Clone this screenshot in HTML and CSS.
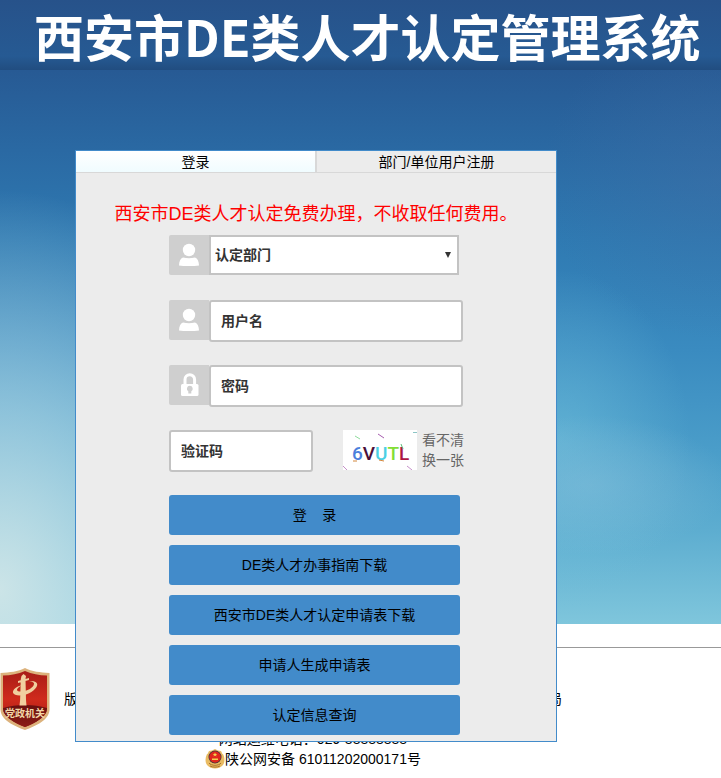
FILE: index.html
```
<!DOCTYPE html>
<html lang="zh-CN">
<head>
  <meta charset="UTF-8" />
  <meta name="viewport" content="width=device-width, initial-scale=1.0"/>
  <title>西安市DE类人才认定管理系统</title>
  <link rel="stylesheet" href="styles.css">
</head>
<body>
  <div class="banner">
    <header class="header">
      <h1>西安市DE类人才认定管理系统</h1>
    </header>

    <div class="login-box">
      <div class="tabs">
        <button type="button" class="tab active">登录</button>
        <button type="button" class="tab">部门/单位用户注册</button>
      </div>

      <form class="login-form">
        <p class="notice">西安市DE类人才认定免费办理，不收取任何费用。</p>

        <div class="fields">
          <div class="field">
            <label class="icon" for="dept" aria-label="认定部门">
              <svg viewBox="0 0 40 40"><circle cx="20" cy="15" r="6.200"/><path d="M10 30.500c.2-4.500 1.400-7 4-8 4 1 8 1 12 0 2.600 1 3.800 3.500 4 8-5 .8-15 .8-20 0z"/></svg>
            </label>
            <select id="dept">
              <option>认定部门</option>
            </select>
            <span class="arrow"></span>
          </div>

          <div class="field">
            <label class="icon" for="username" aria-label="用户名">
              <svg viewBox="0 0 40 40"><circle cx="20" cy="15" r="6.200"/><path d="M10 30.500c.2-4.500 1.400-7 4-8 4 1 8 1 12 0 2.600 1 3.800 3.500 4 8-5 .8-15 .8-20 0z"/></svg>
            </label>
            <input type="text" id="username" placeholder="用户名">
          </div>

          <div class="field">
            <label class="icon" for="password" aria-label="密码">
              <svg viewBox="0 0 40 40">
                <path class="shackle" d="M16 20v-5.500a4.800 4.800 0 0 1 9.600 0V20"/>
                <rect x="12" y="19" width="17.500" height="12" rx="1.500"/>
                <path class="keyhole" d="M20.800 20.800a2.900 2.900 0 0 1 1.500 5.400V28.500h-3V26.200a2.900 2.900 0 0 1 1.500-5.400z"/>
              </svg>
            </label>
            <input type="password" id="password" placeholder="密码">
          </div>

          <div class="field captcha">
            <input type="text" id="code" placeholder="验证码" aria-label="验证码">
            <svg class="captcha-img" viewBox="0 0 74 40" role="img" aria-label="验证码图片">
              <rect width="74" height="40" fill="#fff"/>
              <text x="9" y="30"><tspan fill="#4c7fdc">6</tspan><tspan fill="#4a1038">V</tspan><tspan fill="#4bd0e4">U</tspan><tspan fill="#83de35">T</tspan><tspan fill="#ab1543">L</tspan></text>
              <g fill="none" stroke-width="1">
                <path d="M0 36l4 4M64 36l5 4" stroke="#c58fc9"/>
                <path d="M35 4l6 4" stroke="#a65cae"/>
                <path d="M12 6l5 3" stroke="#8edc9c"/>
                <path d="M58 14l2 5" stroke="#5fbf7b"/>
                <path d="M70 2.500h4" stroke="#8cc5c5"/>
                <path d="M10 31h4M36 30l5 1" stroke="#d3873d"/>
              </g>
            </svg>
            <a class="refresh" href="#">看不清<br>换一张</a>
          </div>
        </div>

        <div class="buttons">
          <button type="submit">登&nbsp;&nbsp;&nbsp;&nbsp;录</button>
          <button type="button">DE类人才办事指南下载</button>
          <button type="button">西安市DE类人才认定申请表下载</button>
          <button type="button">申请人生成申请表</button>
          <button type="button">认定信息查询</button>
        </div>
      </form>
    </div>
  </div>

  <footer class="footer">
    <svg class="badge" viewBox="0 0 50 64" role="img" aria-label="党政机关">
      <defs>
        <linearGradient id="red" x1="0" y1="0" x2="0" y2="1">
          <stop offset="0" stop-color="#a81d17"/>
          <stop offset=".5" stop-color="#cf2b1c"/>
          <stop offset="1" stop-color="#a31813"/>
        </linearGradient>
        <linearGradient id="dark" x1="0" y1="0" x2="0" y2="1">
          <stop offset="0" stop-color="#68100f"/>
          <stop offset="1" stop-color="#8c1d17"/>
        </linearGradient>
      </defs>
      <path d="M25 0c7 3.500 15 4.500 24.500 5v37C49 52 36 58 25 62 14 58 1 52 .5 42V5C10 4.500 18 3.500 25 0z" fill="#dcb27c"/>
      <path d="M25 3c7 3.200 14 4.200 22 4.600V41c-.5 8-12 14-22 18C15 55 3.500 49 3 41V7.600C11 7.200 18 6.200 25 3z" fill="url(#red)"/>
      <path d="M3 40c13-4 31-4 44 0v1c-.5 8-12 14-22 18C15 55 3.500 49 3 41z" fill="url(#dark)"/>
      <g fill="#f0cf9f">
        <path d="M21.500 8l2-2 2.500 2-.5 3 .5 21 .5 5.500h-7l.6-5.500.7-21zM18 13l11-3v2l-11 3z"/>
        <path d="M28 14c7-2 11 1 8.500 5-3 5-11 8.500-17 8.500-7 0-8.500-4-4-7.500 2-1.600 4-2.300 6-2.600-5 2.500-6 5.600-2 6 5 .5 12-2.400 14-6 1.600-2.500-.5-4-5.500-3.400z"/>
      </g>
      <text x="25" y="49">党政机关</text>
    </svg>
    <div class="copyright">
      <p class="owner"><span>版权所有</span><span>西安市人力资源和社会保障局</span></p>
      <p>网站运维电话：029-88888888</p>
      <p class="record">
        <svg class="police" viewBox="0 0 20 20" aria-hidden="true">
          <path d="M2 5c-2 4-2 8 0 11 2 2.500 5 3.500 8 3.500s6-1 8-3.500c2-3 2-7 0-11z" fill="#e9bb62"/>
          <path d="M4 14c2 3 10 3 12 0M5 17c3 1.500 7 1.500 10 0" fill="none" stroke="#a8702c"/>
          <path d="M10 0l3 1.500 3 .5 1.500 3v5c-.5 3-4.500 5-7.500 5.500-3-.5-7-2.500-7.500-5.500V5L4 2l3-.5z" fill="#e9bb62"/>
          <circle cx="10" cy="8" r="6.500" fill="#3b3440"/>
          <circle cx="10" cy="8" r="5.800" fill="#e0261c"/>
          <path d="M10 3.500l.7 1.500h1.600L11 6l.5 1.500L10 6.600l-1.500.9L9 6 7.700 5h1.600zM7 9.500h6v1.500H7z" fill="#f6cf4b"/>
        </svg>
        <a href="#">陕公网安备 61011202000171号</a>
      </p>
    </div>
  </footer>
</body>
</html>
```

FILE: styles.css
```
* {
  box-sizing: border-box;
}
body {
  margin: 0;
  background: #fff;
  color: #000;
  font-family: "Liberation Sans", "Noto Sans CJK SC", sans-serif;
  font-size: 14px;
  line-height: 20px;
}
h1, p {
  margin: 0;
}
a {
  color: inherit;
  text-decoration: none;
}
button, input, select {
  font-family: inherit;
  font-size: 14px;
}

/* banner */
.banner {
  position: relative;
  height: 624px;
  background:
    radial-gradient(ellipse 140px 70px at 590px 485px, rgba(150,198,222,0.35), rgba(140,195,220,0.2) 60%, rgba(140,195,220,0) 100%),
    radial-gradient(ellipse 130px 170px at 560px 440px, rgba(110,190,218,0.6), rgba(110,190,218,0) 100%),
    radial-gradient(ellipse 300px 400px at 0 590px, rgba(208,230,232,0.95), rgba(190,224,232,0.6) 45%, rgba(170,215,230,0) 100%),
    radial-gradient(ellipse 180px 160px at 100% 180px, rgba(66,110,165,0.4), rgba(66,110,165,0) 100%),
    linear-gradient(to bottom, #275a94 70px, #2a69a3 150px, #2f7ab2 240px, #3a8bc0 350px, #4a9dc9 450px, #5dadd0 530px, #7fc6dc 624px);
}
.header {
  height: 70px;
  padding-left: 34px;
  background: linear-gradient(to bottom, #27528a, #265a93 80%, #214d80);
}
.header h1 {
  color: #fff;
  font-family: "Noto Sans CJK SC", sans-serif;
  font-size: 50px;
  line-height: 70px;
  font-weight: bold;
  white-space: nowrap;
}

/* login panel, hangs over the footer */
.login-box {
  position: absolute;
  top: 150px;
  left: 75px;
  width: 482px;
  padding-bottom: 6px;
  background: #ececec;
  border: 1px solid #428bca;
}
.tabs {
  display: flex;
  border-bottom: 1px solid #d8d8d8;
}
.tab {
  flex: 1;
  height: 21px;
  padding: 0;
  border: none;
  background: #ececec;
  line-height: 20px;
  cursor: pointer;
}
.tab.active {
  background: linear-gradient(to bottom, #fff, #f0fcff);
  border-right: 2px solid #d8d8d8;
}
.login-form {
  padding-top: 30px;
}
.notice {
  font-size: 18px;
  line-height: 22px;
  color: #f00;
  text-align: center;
}
.fields {
  display: grid;
  gap: 23px;
  padding: 10px 0 0 93px;
}
.field {
  position: relative;
  display: flex;
  height: 42px;
}
.icon {
  width: 40px;
  height: 40px;
  background: #cfcfcf;
  border-radius: 2px 0 0 2px;
}
.icon svg {
  display: block;
  fill: #fff;
}
.icon .shackle {
  fill: none;
  stroke: #fff;
  stroke-width: 3;
}
.icon .keyhole {
  fill: #cfcfcf;
}
.field input, .field select {
  border: 2px solid #c3c3c3;
  background: #fff;
  color: #333;
  font-weight: bold;
  outline: none;
}
.field input {
  width: 254px;
  height: 42px;
  padding: 0 10px;
  border-radius: 3px;
}
.field input::placeholder {
  color: #333;
  opacity: 1;
}
.field select {
  width: 250px;
  height: 40px;
  padding: 0 4px;
  border-radius: 0;
  appearance: none;
}
.arrow {
  position: absolute;
  top: 17px;
  left: 276px;
  border: 3px solid transparent;
  border-top: 6px solid #333;
  border-bottom: none;
  pointer-events: none;
}
.captcha input {
  width: 144px;
}
.captcha-img {
  width: 74px;
  height: 40px;
  margin: 0 5px 0 30px;
}
.captcha-img text {
  font-family: Roboto, sans-serif;
  font-size: 19px;
  font-weight: 500;
}
.refresh {
  color: #666;
}
.buttons {
  display: grid;
  gap: 10px;
  width: 291px;
  margin: 23px 0 0 93px;
}
.buttons button {
  height: 40px;
  padding: 0 0 2px;
  border: none;
  border-radius: 3px;
  background: #428bca;
  color: #000;
  cursor: pointer;
}

/* footer */
.footer {
  display: flex;
  gap: 14px;
  margin-top: 23px;
  padding-top: 20px;
  border-top: 1px solid #999;
}
.badge {
  width: 50px;
  height: 64px;
}
.badge text {
  fill: #f3d6a8;
  font-family: "Noto Sans CJK SC", sans-serif;
  font-size: 10px;
  font-weight: bold;
  text-anchor: middle;
}
.copyright {
  width: 498px;
  padding-top: 21px;
  text-align: center;
}
.owner {
  display: flex;
  justify-content: space-between;
  margin-bottom: 20px;
}
.record {
  display: flex;
  justify-content: center;
}
.police {
  width: 20px;
  height: 20px;
}
```
